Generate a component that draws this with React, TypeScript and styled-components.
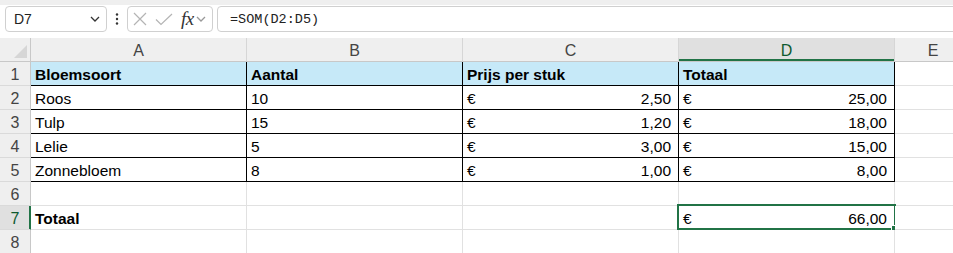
import React from "react";
import styled, { createGlobalStyle, css } from "styled-components";

const GREEN = "#217346";

const GlobalStyle = createGlobalStyle`
  html, body {
    margin: 0;
    padding: 0;
    background: #ffffff;
  }
  body {
    font-family: "Liberation Sans", Arial, sans-serif;
    overflow: hidden;
  }
`;

const Window = styled.div`
  width: 953px;
  height: 253px;
  overflow: hidden;
  background: #ffffff;
`;

const Toolbar = styled.div`
  height: 38px;
  box-sizing: border-box;
  display: flex;
  align-items: flex-start;
  padding: 6px 0 0 5px;
  background: linear-gradient(#efefef 0, #efefef 5px, #ffffff 5px);
`;

const NameBox = styled.div`
  width: 102px;
  height: 26px;
  box-sizing: border-box;
  border: 1px solid #d0d0d0;
  border-radius: 4px;
  background: #fff;
  display: flex;
  align-items: center;
  justify-content: space-between;
  padding: 0 6px 0 8px;
  font-size: 14px;
  color: #222;
`;

const Kebab = styled.div`
  width: 20px;
  height: 26px;
  display: flex;
  align-items: center;
  justify-content: center;
`;

const FuncBox = styled.div`
  width: 86px;
  height: 26px;
  box-sizing: border-box;
  border: 1px solid #d0d0d0;
  border-radius: 4px;
  background: #fff;
  display: flex;
  align-items: center;
  padding-left: 5px;
`;

const FxLabel = styled.span`
  font-family: "Liberation Serif", "Times New Roman", serif;
  font-style: italic;
  font-size: 19px;
  color: #333;
  margin-left: 8px;
  letter-spacing: -0.5px;
`;

const FormulaBox = styled.div`
  flex: 1;
  height: 26px;
  margin-left: 4px;
  margin-right: -10px;
  box-sizing: border-box;
  border: 1px solid #d0d0d0;
  border-radius: 4px;
  background: #fff;
  display: flex;
  align-items: center;
  padding-left: 12px;
  font-family: "Liberation Mono", "Courier New", monospace;
  font-size: 13.5px;
  color: #222;
`;

const Sheet = styled.div`
  display: grid;
  grid-template-columns: 31px 216px 216px 216px 216px 77px 200px;
  grid-auto-rows: 24px;
`;

const Corner = styled.div`
  background: #efefef;
  border-right: 1px solid #c8c8c8;
  border-bottom: 1px solid #c8c8c8;
  display: flex;
  align-items: flex-end;
  justify-content: flex-end;
  padding: 0 3px 3px 0;
`;

const ColHeader = styled.div<{ $active?: boolean }>`
  background: ${(p) => (p.$active ? "#e0e0e0" : "#efefef")};
  border-right: 1px solid #d6d6d6;
  border-bottom: 1px solid #c8c8c8;
  display: flex;
  align-items: center;
  justify-content: center;
  padding-top: 2px;
  font-size: 16px;
  color: ${(p) => (p.$active ? "#0e5a2f" : "#444")};
  ${(p) =>
    p.$active &&
    css`
      box-shadow: inset 0 -2px 0 ${GREEN};
    `}
`;

const RowHeader = styled.div<{ $active?: boolean }>`
  background: ${(p) => (p.$active ? "#e0e0e0" : "#efefef")};
  border-right: 1px solid #c8c8c8;
  border-bottom: 1px solid #dadada;
  display: flex;
  align-items: center;
  justify-content: center;
  padding-top: 2px;
  font-size: 16px;
  color: ${(p) => (p.$active ? "#0e5a2f" : "#444")};
  ${(p) =>
    p.$active &&
    css`
      box-shadow: inset -1px 0 0 ${GREEN};
      border-right-color: ${GREEN};
    `}
`;

const Cell = styled.div<{ $boxed?: boolean; $head?: boolean; $bold?: boolean }>`
  position: relative;
  border-right: 1px solid ${(p) => (p.$boxed ? "#000" : "#e1e1e1")};
  border-bottom: 1px solid ${(p) => (p.$boxed ? "#000" : "#e1e1e1")};
  background: ${(p) => (p.$head ? "#c6e9f8" : "#fff")};
  display: flex;
  align-items: flex-end;
  justify-content: space-between;
  padding: 0 7px 2px 4px;
  line-height: 17px;
  font-size: 15.5px;
  font-weight: ${(p) => (p.$bold ? 700 : 400)};
  color: #000;
  white-space: nowrap;
`;

const Selection = styled.div`
  position: absolute;
  top: -2px;
  left: -2px;
  right: -2px;
  bottom: -1px;
  border: 2px solid ${GREEN};
  pointer-events: none;
`;

const FillHandle = styled.div`
  position: absolute;
  right: -4px;
  bottom: -4px;
  width: 5px;
  height: 5px;
  background: ${GREEN};
  border: 1px solid #fff;
`;

type CellData = { text?: string; euro?: boolean };

const cols = ["A", "B", "C", "D", "E", ""];

const rows: { cells: CellData[]; boxed: boolean; head?: boolean; bold?: boolean }[] = [
  {
    cells: [{ text: "Bloemsoort" }, { text: "Aantal" }, { text: "Prijs per stuk" }, { text: "Totaal" }],
    boxed: true,
    head: true,
    bold: true,
  },
  { cells: [{ text: "Roos" }, { text: "10" }, { text: "2,50", euro: true }, { text: "25,00", euro: true }], boxed: true },
  { cells: [{ text: "Tulp" }, { text: "15" }, { text: "1,20", euro: true }, { text: "18,00", euro: true }], boxed: true },
  { cells: [{ text: "Lelie" }, { text: "5" }, { text: "3,00", euro: true }, { text: "15,00", euro: true }], boxed: true },
  {
    cells: [{ text: "Zonnebloem" }, { text: "8" }, { text: "1,00", euro: true }, { text: "8,00", euro: true }],
    boxed: true,
  },
  { cells: [{}, {}, {}, {}], boxed: false },
  { cells: [{ text: "Totaal" }, {}, {}, { text: "66,00", euro: true }], boxed: false },
  { cells: [{}, {}, {}, {}], boxed: false },
];

const Chevron = ({ color = "#333", w = 10 }: { color?: string; w?: number }) => (
  <svg width={w} height="6" viewBox="0 0 10 6">
    <path d="M1 1 L5 5 L9 1" fill="none" stroke={color} strokeWidth="1.3" />
  </svg>
);

const App = () => {
  return (
    <Window>
      <GlobalStyle />
      <Toolbar>
        <NameBox>
          <span>D7</span>
          <Chevron />
        </NameBox>
        <Kebab>
          <svg width="4" height="12" viewBox="0 0 4 12">
            <circle cx="2" cy="1.5" r="1.2" fill="#333" />
            <circle cx="2" cy="6" r="1.2" fill="#333" />
            <circle cx="2" cy="10.5" r="1.2" fill="#333" />
          </svg>
        </Kebab>
        <FuncBox>
          <svg width="14" height="14" viewBox="0 0 14 14">
            <path d="M1 1 L13 13 M13 1 L1 13" stroke="#b4b4b4" strokeWidth="1.2" fill="none" />
          </svg>
          <svg width="18" height="13" viewBox="0 0 18 13" style={{ marginLeft: 8 }}>
            <path d="M1 6.5 L6 11.5 L17 1" stroke="#b4b4b4" strokeWidth="1.2" fill="none" />
          </svg>
          <FxLabel>fx</FxLabel>
          <span style={{ marginLeft: 2, display: "flex" }}>
            <Chevron color="#999" w={10} />
          </span>
        </FuncBox>
        <FormulaBox>=SOM(D2:D5)</FormulaBox>
      </Toolbar>
      <Sheet>
        <Corner>
          <svg width="13" height="13" viewBox="0 0 13 13">
            <path d="M13 0 L13 13 L0 13 Z" fill="#d6d6d6" />
          </svg>
        </Corner>
        {cols.map((c, i) => (
          <ColHeader key={i} $active={c === "D"}>
            {c}
          </ColHeader>
        ))}
        {rows.map((row, r) => (
          <React.Fragment key={r}>
            <RowHeader $active={r === 6}>{r + 1}</RowHeader>
            {row.cells.map((cell, c) => (
              <Cell
                key={c}
                $boxed={row.boxed}
                $head={row.head}
                $bold={row.bold || (r === 6 && c === 0)}
              >
                {cell.euro ? (
                  <>
                    <span>€</span>
                    <span>{cell.text}</span>
                  </>
                ) : (
                  <span>{cell.text}</span>
                )}
                {r === 6 && c === 3 && (
                  <Selection>
                    <FillHandle />
                  </Selection>
                )}
              </Cell>
            ))}
            <Cell />
            <Cell />
          </React.Fragment>
        ))}
      </Sheet>
    </Window>
  );
};

export default App;
